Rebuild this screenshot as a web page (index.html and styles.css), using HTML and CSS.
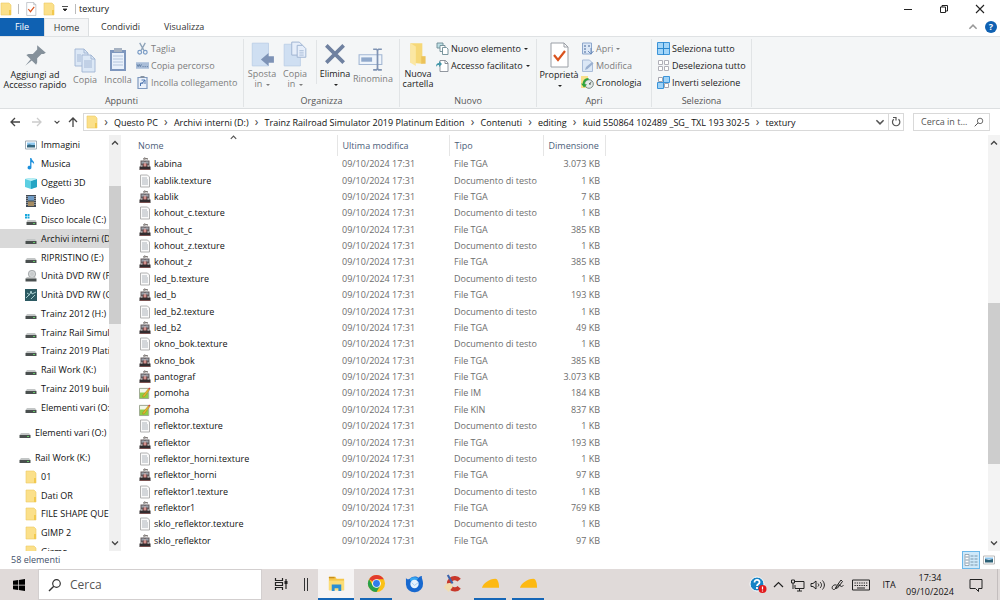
FILE: index.html
```html
<!DOCTYPE html>
<html lang="it">
<head>
    <meta charset="UTF-8">
    <meta name="viewport" content="width=device-width, initial-scale=1.0">
    <title>textury</title>
    <link rel="stylesheet" href="styles.css">
</head>
<body>
    <svg class="sprite" aria-hidden="true">
        <symbol id="i-folder" viewBox="0 0 12 14"><path d="M1 1h8l2 2v10H1z" fill="#fbe08a" stroke="#eccb62" stroke-width=".6"/><path d="M9 8h2v5H9z" fill="#f2c94e"/></symbol>
        <symbol id="i-bigfolder" viewBox="0 0 24 24"><path d="M5 2h11v19l-11-1z" fill="#f6d878"/><path d="M5 2l5 3v18l-5-3z" fill="#fbe7a3"/><path d="M15 14h4v7h-4z" fill="#ecc35a"/></symbol>
        <symbol id="i-check" viewBox="0 0 20 26"><path d="M2 1h13l4 4v20H2z" fill="#fff" stroke="#9a9fa6"/><path d="M15 1v4h4" fill="none" stroke="#9a9fa6"/><path d="M5 13l4 5 7-9" fill="none" stroke="#d9531e" stroke-width="2.2"/></symbol>
        <symbol id="i-pin" viewBox="0 0 24 24"><path d="M14 3l8 7-2 1-2 0-4 4 0 4-1 2-4-4-6 5 5-6-4-4 2-1 4 0 4-4z" fill="#85919b"/></symbol>
        <symbol id="i-copy" viewBox="0 0 24 26"><g fill="#dce8f6" stroke="#9fb4d2" stroke-width=".9"><path d="M2 2h9l4 4v13H2z"/><path d="M9 8h9l4 4v13H9z"/></g><path d="M11 2v4h4M18 8v4h4M4 8h4M4 10h4M4 12h4M4 14h4M11 14h8M11 16h8M11 18h8M11 20h8" fill="none" stroke="#9fb4d2" stroke-width=".9"/></symbol>
        <symbol id="i-paste" viewBox="0 0 20 26"><path d="M2 3h16v21H2z" fill="#7e97be"/><path d="M4 6h12v16H4z" fill="#e9f1fb"/><path d="M6 1h8v4H6z" fill="#a6b2c2"/><path d="M5 9h10M5 12h10M5 15h10M5 18h10" stroke="#b4c5dd"/></symbol>
        <symbol id="i-cut" viewBox="0 0 12 14"><path d="M3 1l4.500 8M9 1L4.500 9" stroke="#8da2b8" stroke-width="1.400" fill="none"/><g fill="none" stroke="#7a9cc6" stroke-width="1.300"><circle cx="3" cy="11" r="2"/><circle cx="9" cy="11" r="2"/></g></symbol>
        <symbol id="i-path" viewBox="0 0 12 12"><path d="M0 3h12v6H0z" fill="#a9bdd8"/><path d="M1 5l1 2 1-2 1 2 1-2M6 7h1M8 7h1M10 7h1" stroke="#58779f" fill="none" stroke-width=".8"/></symbol>
        <symbol id="i-link" viewBox="0 0 12 13"><path d="M1.500 1.500h9v11h-9z" fill="#eaf1fb" stroke="#7f99bf" stroke-width="1.200"/><path d="M4 0h4v2H4z" fill="#8592a3"/><path d="M4 10V7h3M5 4h3.500v4M8.500 4L5 8" fill="none" stroke="#4e76b0"/></symbol>
        <symbol id="i-move" viewBox="0 0 24 24"><path d="M3 2h15v21H3z" fill="#cfdff2" stroke="#b7cbe4" stroke-width=".7"/><path d="M23 14v6h-5v3l-7-6 7-6v3z" fill="#7e93b6"/></symbol>
        <symbol id="i-copyto" viewBox="0 0 24 24"><path d="M2 3h15v20H2z" fill="#cfdff2" stroke="#b7cbe4" stroke-width=".7"/><g fill="#e6eefa" stroke="#9fb4d2" stroke-width=".9"><path d="M9 1h7l3 3v9H9z"/><path d="M14 4h5l3 3v8h-8z"/></g><path d="M16 9h4M16 11h4M16 13h4" stroke="#9fb4d2" stroke-width=".8"/></symbol>
        <symbol id="i-delete" viewBox="0 0 24 24"><path d="M4 4l16 16M20 4L4 20" stroke="#6f81a0" stroke-width="3.400" fill="none"/></symbol>
        <symbol id="i-rename" viewBox="0 0 24 24"><path d="M1 8h21v9H1z" fill="#eef4fb" stroke="#a3b7d3"/><path d="M3 10.500h10v4H3z" fill="#8fa8cb"/><path d="M14 3h3l1 1 1-1h3M18 4v17M14 22h3l1-1 1 1h3" fill="none" stroke="#7f93b3" stroke-width="1.600"/></symbol>
        <symbol id="i-newitem" viewBox="0 0 13 13"><g fill="#fff" stroke="#6c8a93" stroke-width=".9"><path d="M1 1h6v5H1z" fill="#bfe0e6"/><path d="M4 3.500h5v6H4z"/><path d="M6.500 5.500h4l1.500 1.500v5.500H6.500z"/></g></symbol>
        <symbol id="i-easy" viewBox="0 0 13 13"><path d="M4 1.500h5.500l2.500 2.500v8.500H4z" fill="#fff" stroke="#848b94" stroke-width=".9"/><path d="M9 1.500V4.500h3" fill="none" stroke="#848b94"/><path d="M0 8c0-3 1-4 3-4V2l3 3-3 3V6c-1 0-2 0-3 2z" fill="#4396a8"/></symbol>
        <symbol id="i-open" viewBox="0 0 13 13"><path d="M1.500 1h9v11h-9z" fill="#dbe7f6" stroke="#8da7cc"/><path d="M3 4h2M3 7h2M3 10h2M7 4h2" stroke="#7891b7" stroke-width="1.300"/><path d="M10 6v6M7 9l3 3 2.500-3" stroke="#6c8cbb" fill="none"/></symbol>
        <symbol id="i-edit" viewBox="0 0 13 13"><path d="M1.500 1h7l3 3v8.500h-10z" fill="#dbe7f6" stroke="#a9bcd8"/><path d="M4 11l1-3 6-5 1.500 1.500-6 5.500z" fill="#9ab0d0"/></symbol>
        <symbol id="i-history" viewBox="0 0 13 13"><path d="M0 0h7v12H0z" fill="#f8df8a"/><circle cx="8" cy="8" r="4.300" fill="#e3eae8" stroke="#7b8b88"/><path d="M8 8l2.500-2M8 8h2" stroke="#56625f" fill="none"/><path d="M2.500 9c0-4 2-6 5-6" stroke="#2ca43c" stroke-width="2" fill="none"/><path d="M0 7.500l3 4 3-3z" fill="#2ca43c"/></symbol>
        <symbol id="i-all" viewBox="0 0 13 13"><path d="M.5.5h12v12H.5z" fill="#a3d5f8" stroke="#3c94d8"/><path d="M6.500 0v13M0 6.500h13" stroke="#2b87cd"/></symbol>
        <symbol id="i-none" viewBox="0 0 13 13"><g fill="#fff" stroke="#b0b0b8"><path d="M1.500 1.500h4v4h-4zM7.500 1.500h4v4h-4zM1.500 7.500h4v4h-4zM7.500 7.500h4v4h-4z"/></g></symbol>
        <symbol id="i-invert" viewBox="0 0 13 13"><g fill="#fff" stroke="#a5a5ae"><path d="M1.500 1.500h4v4h-4zM7.500 7.500h4v4h-4z"/></g><g fill="#9fd2f7" stroke="#3c94d8"><path d="M6.500.5h6v6h-6zM.5 6.500h6v6h-6z"/></g></symbol>
        <symbol id="i-back" viewBox="0 0 12 12"><path d="M11 6H2M6 2L2 6l4 4" fill="none" stroke="currentColor" stroke-width="1.300"/></symbol>
        <symbol id="i-chev" viewBox="0 0 10 10"><path d="M2 3.500l3 3 3-3" fill="none" stroke="currentColor" stroke-width="1.300"/></symbol>
        <symbol id="i-refresh" viewBox="0 0 12 12"><path d="M8.500 3.200A3.700 3.700 0 1 1 3.800 3.200M3 1.500h3v3" fill="none" stroke="#555" stroke-width="1.200"/></symbol>
        <symbol id="i-search" viewBox="0 0 14 14"><circle cx="8.500" cy="5.500" r="3.800" fill="none" stroke="currentColor" stroke-width="1.200"/><path d="M5.800 8.200L1 13" stroke="currentColor" stroke-width="1.400"/></symbol>
        <symbol id="i-tga" viewBox="0 0 12 14"><path d="M4 1.500h5M4 3l4-1.500M5 .5l4 2" stroke="#77716f" stroke-width=".7"/><path d="M1.500 3.500h9V10h-9z" fill="#625a5d"/><path d="M2.500 4.500h3v2h-3zM6.500 4.500h3v2h-3z" fill="#9aa1ab"/><path d="M4.500 6.500h3V10h-3z" fill="#b5504d"/><path d="M5.500 5h1v5h-1z" fill="#f0d4d0"/><path d="M.5 9.500h11v3.500H.5z" fill="#322c2f"/><path d="M1 12.500h10" stroke="#8d5c5b" stroke-width=".8"/><path d="M2 9h1.500M8.500 9H10" stroke="#e4e0e0"/></symbol>
        <symbol id="i-txt" viewBox="0 0 12 14"><path d="M1.500 1h7l2 2v10h-9z" fill="#fafafa" stroke="#a9a9a9" stroke-width=".9"/><path d="M3 4h5M3 6h6M3 8h6M3 10h6" stroke="#a5abb3" stroke-width=".9"/></symbol>
        <symbol id="i-im" viewBox="0 0 13 14"><path d="M.5 2h10v11H.5z" fill="#f3f8ea" stroke="#8a967f" stroke-width=".9"/><path d="M1 6.500h9v6H1z" fill="#8fce45"/><path d="M4 10l6-7.500 1.500 1L6 11l-2 .5z" fill="#e7b62a" stroke="#8a6a2a" stroke-width=".4"/><path d="M10 2.500L11 1l1.500 1-1 1.500z" fill="#d2433a"/></symbol>
        <symbol id="i-drive" viewBox="0 0 12 12"><path d="M2 6h8l1.500 2H.5z" fill="#c3c6c6"/><path d="M.5 8h11v3H.5z" fill="#4a504f"/><path d="M8 9.500h2" stroke="#65c868"/></symbol>
        <symbol id="i-sysdrive" viewBox="0 0 12 12"><path d="M0 0h2v2H0zM2.500 0h2v2h-2zM0 2.500h2v2H0zM2.500 2.500h2v2h-2z" fill="#17a7dd"/><path d="M2.500 6h8l1 2h-10z" fill="#c3c6c6"/><path d="M1.500 8h10v3h-10z" fill="#4a504f"/><path d="M8 9.500h2" stroke="#65c868"/></symbol>
        <symbol id="i-dvd" viewBox="0 0 12 12"><circle cx="7" cy="4" r="3.700" fill="#d2d5d6" stroke="#8f9496" stroke-width=".7"/><circle cx="7" cy="4" r="1" fill="#fff" stroke="#8f9496" stroke-width=".5"/><path d="M2 7h8l1.500 1.500H.5z" fill="#c3c6c6"/><path d="M.5 8.500h11v3H.5z" fill="#4a5050"/></symbol>
        <symbol id="i-game" viewBox="0 0 12 12"><path d="M0 0h12v12H0z" fill="#2c5a62"/><path d="M1 9l4-4 1-3 1 3 4-2M2 4l3 2M6 10l4-4" stroke="#a9cfd0" fill="none"/></symbol>
        <symbol id="i-pics" viewBox="0 0 12 12"><path d="M.5 2h11v8H.5z" fill="#fff" stroke="#8b9aa6" stroke-width=".8"/><path d="M2 3.500h8v3H2z" fill="#90c9f0"/><path d="M2 6.500c2-2 3 0 8-.5v2.500H2z" fill="#33667f"/></symbol>
        <symbol id="i-music" viewBox="0 0 12 14"><path d="M5 0h1.500c0 3 4 3.500 3 7.500C9 5.500 7.500 5 6.500 5v6c0 3-4.500 3-4.500.5S4 9 5 9.300z" fill="#1b8fdc"/></symbol>
        <symbol id="i-cube" viewBox="0 0 12 12"><path d="M0 2l6-1 6 1v8l-6 2-6-2z" fill="#5ccfe2"/><path d="M6 4l6-2v8l-6 2z" fill="#25a5c4"/><path d="M0 2l6-1 6 1-6 2z" fill="#bcf0f5"/></symbol>
        <symbol id="i-video" viewBox="0 0 12 12"><path d="M1 0h10v12H1z" fill="#414a54"/><path d="M3 1h6v4.500H3z" fill="#6f9cc7"/><path d="M3 6.500h6V11H3z" fill="#a58c63"/><path d="M2 1v10M10 1v10" stroke="#fff" stroke-width=".8" stroke-dasharray="1 1"/></symbol>
    </svg>

    <header class="titlebar">
        <svg class="icon folder"><use href="#i-folder"/></svg>
        <span class="bar"></span>
        <button class="plain" aria-label="Proprietà"><svg class="icon folder"><use href="#i-check"/></svg></button>
        <button class="plain" aria-label="Nuova cartella"><svg class="icon folder"><use href="#i-folder"/></svg></button>
        <button class="plain" aria-label="Personalizza"><svg class="icon caret" viewBox="0 0 8 8"><path d="M1 1.500h6M2 4h4L4 6z" fill="#222" stroke="#222" stroke-width=".8"/></svg></button>
        <span class="bar"></span>
        <h1 class="title">textury</h1>
        <div class="window-controls">
            <button class="plain" aria-label="Riduci a icona"><svg class="icon" viewBox="0 0 12 12"><path d="M2 6.500h8" stroke="#222"/></svg></button>
            <button class="plain" aria-label="Ripristina"><svg class="icon" viewBox="0 0 12 12"><path d="M2.500 4h5v5.500h-5zM4 4V2.500h5.500V8H8" fill="none" stroke="#222"/></svg></button>
            <button class="plain" aria-label="Chiudi"><svg class="icon" viewBox="0 0 12 12"><path d="M2 2l8 8M10 2l-8 8" stroke="#222" stroke-width="1.100"/></svg></button>
        </div>
    </header>

    <nav class="tabs">
        <button class="tab file">File</button>
        <button class="tab home">Home</button>
        <button class="tab">Condividi</button>
        <button class="tab">Visualizza</button>
        <div class="tabs-end">
            <button class="plain up" aria-label="Riduci barra multifunzione"><svg class="icon"><use href="#i-chev"/></svg></button>
            <button class="help" aria-label="Guida">?</button>
        </div>
    </nav>

    <section class="ribbon">
        <div class="group clipboard">
            <div class="tools">
                <button class="big pin"><svg><use href="#i-pin"/></svg>Aggiungi ad<br>Accesso rapido</button>
                <button class="big narrow" disabled><svg><use href="#i-copy"/></svg>Copia</button>
                <button class="big" disabled><svg><use href="#i-paste"/></svg>Incolla</button>
                <div class="stack">
                    <button class="small" disabled><svg><use href="#i-cut"/></svg>Taglia</button>
                    <button class="small" disabled><svg><use href="#i-path"/></svg>Copia percorso</button>
                    <button class="small" disabled><svg><use href="#i-link"/></svg>Incolla collegamento</button>
                </div>
            </div>
            <div class="group-name">Appunti</div>
        </div>
        <div class="group organize">
            <div class="tools">
                <button class="big" disabled><svg><use href="#i-move"/></svg>Sposta<br>in <i class="arrow"></i></button>
                <button class="big narrow" disabled><svg><use href="#i-copyto"/></svg>Copia<br>in <i class="arrow"></i></button>
                <span class="divider"></span>
                <button class="big"><svg><use href="#i-delete"/></svg>Elimina<br><i class="arrow"></i></button>
                <button class="big" disabled><svg><use href="#i-rename"/></svg>Rinomina</button>
            </div>
            <div class="group-name">Organizza</div>
        </div>
        <div class="group new">
            <div class="tools">
                <button class="big"><svg><use href="#i-bigfolder"/></svg>Nuova<br>cartella</button>
                <div class="stack">
                    <button class="small"><svg><use href="#i-newitem"/></svg>Nuovo elemento <i class="arrow"></i></button>
                    <button class="small"><svg><use href="#i-easy"/></svg>Accesso facilitato <i class="arrow"></i></button>
                </div>
            </div>
            <div class="group-name">Nuovo</div>
        </div>
        <div class="group open">
            <div class="tools">
                <button class="big wide"><svg><use href="#i-check"/></svg>Proprietà<br><i class="arrow"></i></button>
                <div class="stack">
                    <button class="small" disabled><svg><use href="#i-open"/></svg>Apri <i class="arrow"></i></button>
                    <button class="small" disabled><svg><use href="#i-edit"/></svg>Modifica</button>
                    <button class="small"><svg><use href="#i-history"/></svg>Cronologia</button>
                </div>
            </div>
            <div class="group-name">Apri</div>
        </div>
        <div class="group select">
            <div class="tools">
                <div class="stack">
                    <button class="small"><svg><use href="#i-all"/></svg>Seleziona tutto</button>
                    <button class="small"><svg><use href="#i-none"/></svg>Deseleziona tutto</button>
                    <button class="small"><svg><use href="#i-invert"/></svg>Inverti selezione</button>
                </div>
            </div>
            <div class="group-name">Seleziona</div>
        </div>
    </section>

    <div class="location">
        <div class="history">
            <button class="plain" aria-label="Indietro"><svg class="icon"><use href="#i-back"/></svg></button>
            <button class="plain forward" aria-label="Avanti"><svg class="icon"><use href="#i-back"/></svg></button>
            <button class="plain" aria-label="Percorsi recenti"><svg class="icon recent"><use href="#i-chev"/></svg></button>
            <button class="plain parent" aria-label="Su"><svg class="icon"><use href="#i-back"/></svg></button>
        </div>
        <div class="address">
            <svg class="icon folder"><use href="#i-folder"/></svg>
            <ol class="crumbs">
                <li><a href="#">Questo PC</a></li>
                <li><a href="#">Archivi interni (D:)</a></li>
                <li><a href="#">Trainz Railroad Simulator 2019 Platinum Edition</a></li>
                <li><a href="#">Contenuti</a></li>
                <li><a href="#">editing</a></li>
                <li><a href="#">kuid 550864 102489 _SG_ TXL 193 302-5</a></li>
                <li><a href="#">textury</a></li>
            </ol>
            <button class="plain" aria-label="Percorsi precedenti"><svg class="icon"><use href="#i-chev"/></svg></button>
            <button class="plain refresh" aria-label="Aggiorna"><svg class="icon"><use href="#i-refresh"/></svg></button>
        </div>
        <label class="find">
            <input type="text" placeholder="Cerca in t..." aria-label="Cerca in textury">
            <svg class="icon"><use href="#i-search"/></svg>
        </label>
    </div>

    <main class="content">
        <nav class="tree" id="tree"></nav>
        <div class="scrollbar tree-scroll">
            <button class="plain up" aria-label="Scorri su"><svg class="icon"><use href="#i-chev"/></svg></button>
            <div class="track"><div class="thumb"></div></div>
            <button class="plain" aria-label="Scorri giù"><svg class="icon"><use href="#i-chev"/></svg></button>
        </div>
        <div class="files">
            <table>
                <thead>
                    <tr>
                        <th class="col-name">Nome<svg class="sort"><use href="#i-chev"/></svg></th>
                        <th class="col-date">Ultima modifica</th>
                        <th class="col-type">Tipo</th>
                        <th class="col-size">Dimensione</th>
                        <th></th>
                    </tr>
                </thead>
                <tbody id="rows"></tbody>
            </table>
        </div>
        <div class="scrollbar file-scroll">
            <button class="plain up" aria-label="Scorri su"><svg class="icon"><use href="#i-chev"/></svg></button>
            <div class="track"><div class="thumb"></div></div>
            <button class="plain" aria-label="Scorri giù"><svg class="icon"><use href="#i-chev"/></svg></button>
        </div>
    </main>

    <div class="status">
        <span>58 elementi</span>
        <div class="views">
            <button class="view active" aria-label="Dettagli"><svg viewBox="0 0 14 14"><path d="M1 1.500h4v11H1z" fill="#fff" stroke="#8a98a3" stroke-width=".8"/><path d="M1.500 4h3M1.500 7h3M1.500 10h3M6.500 3h3M10.500 3h3M6.500 6h3M10.500 6h3M6.500 9h3M10.500 9h3M6.500 12h3M10.500 12h3" stroke="#6f8da3" stroke-width=".9"/></svg></button>
            <button class="view" aria-label="Icone grandi"><svg viewBox="0 0 14 14"><path d="M1.500 3h11v8h-11z" fill="#fff" stroke="#aaa" stroke-width=".8"/><path d="M3 4.500h8v2H3z" fill="#8dc4ec"/><path d="M3 6l4 1 4-1v3.500H3z" fill="#2d6177"/></svg></button>
        </div>
    </div>

    <footer class="taskbar">
        <button class="start" aria-label="Start"><svg class="icon" viewBox="0 0 13 13"><path d="M0 2l5.500-.8v4.900H0zM6.300 1L13 0v6.100H6.300zM0 7h5.500v4.800L0 11zM6.300 7H13v6l-6.700-1z" fill="#000"/></svg></button>
        <label class="search">
            <svg class="icon"><use href="#i-search"/></svg>
            <input type="text" placeholder="Cerca" aria-label="Cerca">
        </label>
        <button class="app taskview" aria-label="Visualizzazione attività"><svg viewBox="0 0 16 16"><path d="M2.500 2v2.500h7V2M2.500 14v-2.500h7V14M2.500 6.500h7v3h-7zM13 3v10" fill="none" stroke="#222" stroke-width="1.200"/><path d="M11.500 5h3v3h-3z" fill="#222"/></svg></button>
        <span class="grip"></span>
        <button class="app active" aria-label="Esplora file"><svg viewBox="0 0 20 20"><path d="M2 3h7l1 2h8v12H2z" fill="#f5c64a"/><path d="M2 7h16v10H2z" fill="#fcdd76"/><path d="M5 11h10v7h-3v-3H8v3H5z" fill="#2b8fd2"/><path d="M2 3h6v1.500H2z" fill="#c98f1b"/></svg></button>
        <button class="app running" aria-label="Chrome"><svg viewBox="0 0 20 20"><circle cx="10" cy="10" r="9" fill="#fbc116"/><path d="M10 10L2.200 5.500A9 9 0 0 1 17.800 5.500H10z" fill="#e33b2e"/><path d="M2.200 5.500A9 9 0 0 0 10 19l4-7-4-2-4 2z" fill="#27a04a"/><circle cx="10" cy="10" r="4.600" fill="#fff"/><circle cx="10" cy="10" r="3.600" fill="#2f7de9"/></svg></button>
        <button class="app" aria-label="Thunderbird"><svg viewBox="0 0 20 20"><path d="M1 4c1 2 2 2 4 1 3-3 7-3 9-1 1-1 2-2 4-2-1 2 1 4 1 8a9 8.800 0 0 1-18 1c0-3 0-5 0-7z" fill="#1768cf"/><path d="M5 5c3-2 7-2 9 0l-3 2-5 1z" fill="#38a8f2"/><circle cx="10" cy="10.500" r="4.400" fill="#e7f3fd"/><path d="M7 9l3 3 4-3" stroke="#a8d0f3" fill="none"/></svg></button>
        <button class="app" aria-label="CCleaner"><svg viewBox="0 0 20 20"><path d="M17 6.500A6 6 0 1 0 17 14" fill="none" stroke="#c8382b" stroke-width="4.500"/><path d="M5 1l5 9" stroke="#3b63ad" stroke-width="2.200"/><path d="M4 10c4-2 7 1 6 4l-4 5-5-5z" fill="#f1ddb0"/></svg></button>
        <button class="app multi" aria-label="Trainz 2019"><svg viewBox="0 0 20 20"><path d="M1 14.500C2 10 9 5 15 5c3 0 4 5 4 9.500z" fill="#fdb912"/></svg></button>
        <button class="app multi" aria-label="Trainz"><svg viewBox="0 0 20 20"><path d="M1 14.500C2 10 9 5 15 5c3 0 4 5 4 9.500z" fill="#fdb912"/></svg></button>

        <div class="tray">
            <button class="plain" aria-label="Assistenza"><svg viewBox="0 0 18 18"><circle cx="8" cy="8" r="7" fill="#1683c5" stroke="#fff"/><path d="M5.500 6.500c0-4 5.500-3 5 0 0 1.500-2.500 1.500-2.500 3.500M8 11v2" fill="none" stroke="#fff" stroke-width="1.800"/><circle cx="13.500" cy="13" r="4" fill="#e2191c"/><path d="M13.500 10.500v3M13.500 14.500v1" stroke="#fff" stroke-width="1.200"/></svg></button>
            <button class="plain" aria-label="Icone nascoste"><svg viewBox="0 0 18 18"><path d="M5 11l4.500-4.500L14 11" fill="none" stroke="#222" stroke-width="1.200"/></svg></button>
            <button class="plain" aria-label="Rete"><svg viewBox="0 0 18 18"><path d="M6 5.500h9v7H6V9M8 15h5M10.500 12.500V15M2.500 4h3v3h-3zM4 7v6" fill="none" stroke="#222"/></svg></button>
            <button class="plain" aria-label="Volume"><svg viewBox="0 0 18 18"><path d="M2 7.500h2l3-2.500v8l-3-2.500H2zM9 7.500c1 1 1 2 0 3M11 6c2 2 2 4 0 6M13.500 4.500c2.500 3 2.500 6 0 9" fill="none" stroke="#222"/></svg></button>
            <button class="plain" aria-label="Penna"><svg viewBox="0 0 18 18"><path d="M7 11l5-7 1.500 1.500-5 6.500-2 .5zM7.500 9C3 8 2 13 4.500 13.500s3.500-5 6-4.500-.5 3 4 .5" fill="none" stroke="#222"/></svg></button>
            <button class="plain keys" aria-label="Tastiera"><svg viewBox="0 0 20 18"><path d="M1.500 4h17v10h-17z" fill="none" stroke="#222"/><path d="M3.500 7h13M3.500 9.500h13" stroke="#222" stroke-dasharray="1.300 1"/><path d="M6 12h8" stroke="#222"/></svg></button>
            <button class="plain lang">ITA</button>
            <div class="clock"><span>17:34</span><span>09/10/2024</span></div>
            <button class="plain notices" aria-label="Notifiche"><svg viewBox="0 0 18 18"><path d="M3 3.500h12v9h-3.500v3L8.500 12.500H3z" fill="none" stroke="#222"/></svg></button>
            <span class="desktop-edge"></span>
        </div>
    </footer>

    <script src="script.js"></script>
</body>
</html>
```

FILE: styles.css
```css
* {
    box-sizing: border-box;
}

body {
    margin: 0;
    height: 100vh;
    display: flex;
    flex-direction: column;
    overflow: hidden;
    background: #fff;
    color: #111;
    font-family: "Open Sans", "Noto Sans", sans-serif;
    font-size: 9px;
    line-height: 12px;
}

button,
input {
    margin: 0;
    padding: 0;
    border: none;
    background: none;
    color: inherit;
    font: inherit;
}

a {
    color: inherit;
    text-decoration: none;
}

svg {
    display: block;
    flex: none;
}

.sprite {
    position: absolute;
    width: 0;
    height: 0;
}

.icon {
    width: 12px;
    height: 12px;
}

.icon.folder {
    height: 14px;
}

.plain {
    display: flex;
    align-items: center;
    justify-content: center;
}

.up svg {
    transform: rotate(180deg);
}

/* title bar */
.titlebar {
    flex: none;
    display: flex;
    align-items: center;
    gap: 6px;
    height: 18px;
}

.bar {
    width: 1px;
    height: 10px;
    background: #bbb;
}

.icon.caret {
    width: 8px;
    height: 8px;
}

.title {
    margin: 0 0 0 -3px;
    font-size: 9px;
    font-weight: normal;
}

.window-controls {
    display: flex;
    margin-left: auto;
}

.window-controls .plain {
    width: 36px;
    height: 16px;
}

.window-controls .plain:last-child {
    margin-right: 2px;
}

/* ribbon tabs */
.tabs {
    flex: none;
    display: flex;
    height: 18px;
}

.tab {
    padding: 0 12px;
    color: #333;
}

.tab.file {
    width: 44px;
    background: #0f61b2;
    color: #fff;
}

.tab.home {
    width: 45px;
    padding: 0;
    border: 1px solid #dcdfe1;
    border-bottom: none;
    background: #f5f6f7;
}

.tabs-end {
    display: flex;
    align-items: center;
    gap: 6px;
    margin-left: auto;
    padding-right: 3px;
    color: #999;
}

.help {
    width: 12px;
    height: 12px;
    border-radius: 50%;
    background: #0f61b2;
    color: #fff;
    font-weight: bold;
    line-height: 12px;
    text-align: center;
}

/* ribbon */
.ribbon {
    flex: none;
    display: flex;
    height: 73px;
    border-top: 1px solid #dfe2e4;
    border-bottom: 1px solid #dcdfe1;
    background: #f4f6f7;
    color: #222;
}

.group {
    flex: none;
    display: flex;
    flex-direction: column;
    justify-content: space-between;
    margin: 2px 0 1px;
    border-right: 1px solid #e1e4e6;
}

.clipboard {
    width: 244px;
}

.organize {
    width: 156px;
}

.new {
    width: 137px;
}

.open {
    width: 115px;
}

.select {
    width: 100px;
}

.tools {
    display: flex;
    padding-top: 1px;
}

.group-name {
    color: #555;
    text-align: center;
}

.big {
    width: 36px;
    display: block;
    line-height: 10px;
    text-align: center;
    white-space: nowrap;
}

.big svg {
    width: 26px;
    height: 26px;
    margin: 1px auto 2px;
}

.big.pin {
    width: 70px;
}

.big.narrow {
    width: 30px;
}

.big.wide {
    width: 44px;
}

.stack {
    display: flex;
    flex-direction: column;
}

.small {
    display: flex;
    align-items: center;
    gap: 2px;
    height: 17px;
    white-space: nowrap;
}

.small svg {
    width: 13px;
    height: 13px;
}

.select .stack {
    padding-left: 5px;
}

.big:disabled,
.small:disabled {
    color: #7d7d7d;
}

.arrow {
    display: inline-block;
    margin-left: 1px;
    border: 2px solid transparent;
    border-top-color: currentColor;
    border-bottom: none;
    vertical-align: middle;
}

.divider {
    width: 1px;
    height: 44px;
    margin: 0 0 0 6px;
    background: #e1e4e6;
}

/* address row */
.location {
    flex: none;
    display: flex;
    align-items: center;
    height: 26px;
    padding-right: 10px;
}

.history {
    display: flex;
    align-items: center;
    gap: 10px;
    width: 83px;
    padding-left: 9px;
    color: #444;
}

.history .forward {
    color: #ccc;
}

.forward svg {
    transform: scaleX(-1);
}

.icon.recent {
    width: 8px;
    height: 8px;
}

.parent svg {
    transform: rotate(90deg);
}

.history .parent {
    margin-left: -4px;
}

.address {
    flex: 1;
    display: flex;
    align-items: center;
    height: 18px;
    padding-left: 2px;
    border: 1px solid #d9d9d9;
}

.crumbs {
    flex: 1;
    display: flex;
    margin: 0;
    padding: 0;
    list-style: none;
}

.crumbs li::before {
    content: "›";
    display: inline-block;
    width: 16px;
    font-size: 12px;
    line-height: 12px;
    text-align: center;
    color: #444;
}

.address .plain {
    width: 16px;
    height: 16px;
    color: #555;
}

.address .refresh {
    width: 15px;
    border-left: 1px solid #d9d9d9;
}

.find {
    display: flex;
    align-items: center;
    width: 77px;
    height: 18px;
    margin-left: 9px;
    padding: 0 5px 0 7px;
    border: 1px solid #d9d9d9;
    color: #555;
}

.find input {
    width: 100%;
    min-width: 0;
}

.find .icon {
    width: 10px;
    height: 10px;
}

input::placeholder {
    color: #555;
    opacity: 1;
}

/* folder tree and file list */
.content {
    flex: 1;
    display: flex;
    min-height: 0;
}

.tree {
    flex: none;
    width: 109px;
    overflow: hidden;
}

.node {
    display: flex;
    align-items: center;
    gap: 4px;
    height: 19px;
    padding-left: 25px;
    overflow: hidden;
    white-space: nowrap;
}

.node:nth-child(4n) {
    height: 18px;
}

.node.root {
    height: 25px;
    padding-top: 6px;
    padding-left: 19px;
}

.node.selected {
    background: #d9d9d9;
}

.scrollbar {
    flex: none;
    display: flex;
    flex-direction: column;
    width: 12px;
    background: #f0f0f0;
    color: #444;
}

.scrollbar .plain {
    height: 16px;
}

.scrollbar .icon {
    width: 10px;
    height: 10px;
}

.track {
    flex: 1;
}

.thumb {
    background: #cdcdcd;
}

.tree-scroll .thumb {
    height: 36%;
    margin-top: 35px;
}

.file-scroll .thumb {
    height: 42%;
    margin-top: 152px;
}

.file-scroll {
    background: #f3f3f3;
}

.files {
    flex: 1;
    min-width: 0;
    padding: 0 0 2px 17px;
}

table {
    width: 100%;
    height: 100%;
    border-collapse: collapse;
    table-layout: fixed;
}

th {
    position: relative;
    height: 21px;
    padding: 0 0 0 5px;
    border-right: 1px solid #e5e5e5;
    color: #4c607a;
    font-weight: normal;
    text-align: left;
}

th:first-child {
    padding-left: 0;
}

th:last-child {
    border-right: none;
}

.col-name {
    width: 199px;
}

.col-date {
    width: 112px;
}

.col-type {
    width: 94px;
}

.col-size {
    width: 62px;
}

.sort {
    position: absolute;
    top: -2px;
    left: 46%;
    width: 9px;
    height: 9px;
    color: #555;
    transform: rotate(180deg);
}

td {
    padding: 0 0 0 5px;
    color: #6d6d6d;
    white-space: nowrap;
}

td.name {
    padding-left: 1px;
    color: #111;
}

td.size {
    padding: 0 5px 0 0;
    text-align: right;
}

.file-name {
    display: flex;
    align-items: center;
    gap: 3px;
}

.file-name svg {
    width: 12px;
    height: 14px;
}

/* status bar */
.status {
    flex: none;
    display: flex;
    align-items: center;
    justify-content: space-between;
    height: 18px;
    padding: 0 2px 0 11px;
    color: #3f5069;
}

.views {
    display: flex;
}

.view {
    width: 18px;
    height: 18px;
    padding: 1px;
    border: 1px solid transparent;
}

.view svg {
    width: 14px;
    height: 14px;
}

.view.active {
    border-color: #6cb8ea;
    background: #cfe9fa;
}

/* taskbar */
.taskbar {
    flex: none;
    display: flex;
    align-items: center;
    height: 31px;
    background: #e0dad9;
}

.start {
    display: flex;
    align-items: center;
    justify-content: center;
    width: 38px;
    height: 31px;
}

.search {
    display: flex;
    align-items: center;
    gap: 8px;
    width: 224px;
    height: 31px;
    padding-left: 9px;
    border: 1px solid #d3cfcf;
    background: #fff;
    color: #333;
    font-size: 12px;
}

.search .icon {
    width: 14px;
    height: 14px;
}

.search input {
    flex: 1;
    min-width: 0;
}

.app {
    display: flex;
    align-items: center;
    justify-content: center;
    width: 32px;
    height: 31px;
    margin-right: 6px;
    border-bottom: 2px solid transparent;
}

.app svg {
    width: 19px;
    height: 19px;
}

.app.taskview {
    width: 38px;
    margin-right: 4px;
}

.taskview svg {
    width: 16px;
    height: 16px;
}

.grip {
    width: 4px;
    height: 13px;
    margin-right: 10px;
    border: solid #333;
    border-width: 0 1px;
}

.app.active {
    width: 36px;
    background: #f6f4f4;
}

.app.active,
.app.running,
.app.multi {
    border-color: #1566b7;
}

.tray {
    display: flex;
    align-items: center;
    gap: 2px;
    margin-left: auto;
}

.tray svg {
    width: 18px;
    height: 18px;
}

.tray .keys {
    width: 24px;
}

.keys svg {
    width: 20px;
}

.tray .lang {
    width: 28px;
}

.tray .notices {
    width: 38px;
}

.clock {
    display: flex;
    flex-direction: column;
    width: 50px;
    line-height: 14px;
    text-align: center;
}

.desktop-edge {
    width: 3px;
    height: 31px;
    border-left: 1px solid #c4bebe;
}
```

FILE: script.js
```js
const nodes = [
    ['pics', 'Immagini'],
    ['music', 'Musica'],
    ['cube', 'Oggetti 3D'],
    ['video', 'Video'],
    ['sysdrive', 'Disco locale (C:)'],
    ['drive', 'Archivi interni (D:)', 'selected'],
    ['drive', 'RIPRISTINO (E:)'],
    ['dvd', 'Unità DVD RW (F:)'],
    ['game', 'Unità DVD RW (G:)'],
    ['drive', 'Trainz 2012 (H:)'],
    ['drive', 'Trainz Rail Simulator'],
    ['drive', 'Trainz 2019 Platinum'],
    ['drive', 'Rail Work (K:)'],
    ['drive', 'Trainz 2019 build'],
    ['drive', 'Elementi vari (O:)'],
    ['drive', 'Elementi vari (O:)', 'root'],
    ['drive', 'Rail Work (K:)', 'root'],
    ['folder', '01'],
    ['folder', 'Dati OR'],
    ['folder', 'FILE SHAPE QUE'],
    ['folder', 'GIMP 2'],
    ['folder', 'Gizmo']
];

const types = {
    tga: 'File TGA',
    txt: 'Documento di testo',
    im: 'File IM',
    kin: 'File KIN'
};

const files = [
    ['kabina', 'tga', '3.073'],
    ['kablik.texture', 'txt', '1'],
    ['kablik', 'tga', '7'],
    ['kohout_c.texture', 'txt', '1'],
    ['kohout_c', 'tga', '385'],
    ['kohout_z.texture', 'txt', '1'],
    ['kohout_z', 'tga', '385'],
    ['led_b.texture', 'txt', '1'],
    ['led_b', 'tga', '193'],
    ['led_b2.texture', 'txt', '1'],
    ['led_b2', 'tga', '49'],
    ['okno_bok.texture', 'txt', '1'],
    ['okno_bok', 'tga', '385'],
    ['pantograf', 'tga', '3.073'],
    ['pomoha', 'im', '184'],
    ['pomoha', 'kin', '837'],
    ['reflektor.texture', 'txt', '1'],
    ['reflektor', 'tga', '193'],
    ['reflektor_horni.texture', 'txt', '1'],
    ['reflektor_horni', 'tga', '97'],
    ['reflektor1.texture', 'txt', '1'],
    ['reflektor1', 'tga', '769'],
    ['sklo_reflektor.texture', 'txt', '1'],
    ['sklo_reflektor', 'tga', '97']
];

document.getElementById('tree').innerHTML = nodes.map(([icon, name, state]) =>
    `<a href="#" class="node ${state || ''}"><svg class="icon ${icon}"><use href="#i-${icon}"/></svg>${name}</a>`
).join('');

document.getElementById('rows').innerHTML = files.map(([name, type, size]) => `
    <tr>
        <td class="name"><div class="file-name"><svg><use href="#i-${type === 'kin' ? 'im' : type}"/></svg>${name}</div></td>
        <td>09/10/2024 17:31</td>
        <td>${types[type]}</td>
        <td class="size">${size} KB</td>
        <td></td>
    </tr>`
).join('');
```
